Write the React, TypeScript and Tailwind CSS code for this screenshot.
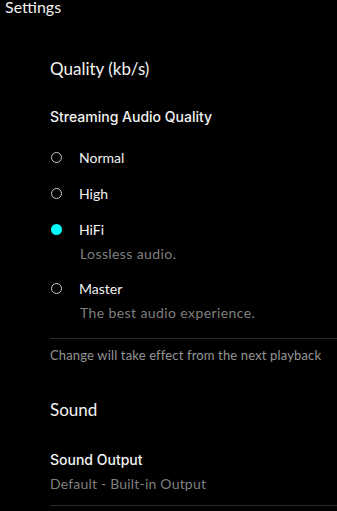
import React from 'react'

const options = [
  { label: 'Normal', desc: '' },
  { label: 'High', desc: '' },
  { label: 'HiFi', desc: 'Lossless audio.' },
  { label: 'Master', desc: 'The best audio experience.' },
]

const medium = { fontFamily: 'Inter, Lato, sans-serif' }

const Radio: React.FC<{ checked: boolean }> = ({ checked }) =>
  checked ? (
    <span className="block w-[11px] h-[11px] rounded-full bg-[#00ffff]" />
  ) : (
    <span className="block w-[11px] h-[11px] rounded-full border border-[#c8c8c8]" />
  )

export default function App() {
  const selected = 'HiFi'

  return (
    <div
      className="w-[337px] h-[511px] overflow-hidden bg-black text-[#f2f2f2]"
      style={{ fontFamily: 'Lato, "Noto Sans", sans-serif' }}
    >
      <div className="pl-[5px] text-[16px] leading-[16px] h-[14px] -mt-px">Settings</div>

      <div className="pl-[50px] pt-px">
        <h2 className="mt-[43px] text-[17px] leading-[24px] h-[24px]">Quality (kb/s)</h2>
        <h3 className="mt-[26px] text-[14px] leading-[20px] h-[20px] font-medium" style={medium}>
          Streaming Audio Quality
        </h3>

        <div className="mt-[21px] flex flex-col">
          {options.map((o, i) => (
            <div key={o.label} className={i === 0 ? '' : o.label === 'Master' ? 'mt-[15px]' : 'mt-[16px]'}>
              <div className="flex items-center h-[20px] text-[14px] leading-[20px]">
                <span className="ml-[1px] mt-[-1px]">
                  <Radio checked={o.label === selected} />
                </span>
                <span className="ml-[17px]">{o.label}</span>
              </div>
              {o.desc && (
                <div className="mt-[4px] ml-[30px] text-[14px] leading-[20px] h-[20px] tracking-[0.4px] text-[#7f7f7f]">
                  {o.desc}
                </div>
              )}
            </div>
          ))}
        </div>

        <div className="mt-[15px] h-px bg-[#2a2a2a]" />
        <p className="mt-[8px] text-[13px] leading-[16px] h-[16px] tracking-[0.15px] text-[#959595]">
          Change will take effect from the next playback
        </p>

        <h2 className="mt-[35px] text-[17px] leading-[24px] h-[24px]">Sound</h2>
        <h3 className="mt-[28px] text-[14px] leading-[20px] h-[20px] font-medium" style={medium}>
          Sound Output
        </h3>
        <div className="mt-[4px] text-[14px] leading-[20px] h-[20px] tracking-[0.2px] text-[#7f7f7f]">
          Default - Built-in Output
        </div>
        <div className="mt-[11px] h-px bg-[#2a2a2a]" />
      </div>
    </div>
  )
}
